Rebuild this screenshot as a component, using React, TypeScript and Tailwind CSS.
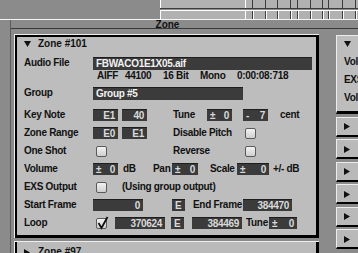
import React from 'react';

const keys = ['w-[85px]', 'w-[7px]', 'w-[13px]', 'w-[12px]', 'w-[13px]', 'w-[7px]', 'w-[13px]', 'w-[12px]', 'w-[6px]', 'w-[14px]', 'w-[13px]', 'w-[3px]'];

type FieldProps = { w: string; l?: string; r?: string; h?: string };

function Field({ w, l, r, h = 'h-[12px]' }: FieldProps) {
  return (
    <div className={`${w} ${h} shrink-0 bg-[#3b3b3b] border-t border-[#1e1e1e] text-[#dadada] flex items-center justify-between px-[3px] leading-none`}>
      <span>{l}</span>
      <span>{r}</span>
    </div>
  );
}

function Check({ on = false }: { on?: boolean }) {
  return (
    <div className="relative w-[11px] h-[11px] shrink-0 bg-gradient-to-b from-[#f2f2f2] to-[#cfcfcf] border border-[#5a5a5a] rounded-[2px]">
      {on && (
        <svg className="absolute -left-px -top-[3px]" width="13" height="14" viewBox="0 0 13 14">
          <path d="M2.5 7 L5.5 12 L11.5 1" fill="none" stroke="#111" strokeWidth="1.8" />
        </svg>
      )}
    </div>
  );
}

function DownTri() {
  return (
    <svg width="7" height="6" viewBox="0 0 7 6" className="shrink-0">
      <polygon points="0,0 7,0 3.5,6" fill="#111" />
    </svg>
  );
}

function RightTri() {
  return (
    <svg width="6" height="7" viewBox="0 0 6 7" className="shrink-0">
      <polygon points="0,0 6,3.5 0,7" fill="#111" />
    </svg>
  );
}

export default function App() {
  return (
    <div className="w-[358px] h-[253px] overflow-hidden bg-[#8b8b8b] font-['Liberation_Sans',Arial,sans-serif] font-bold text-[10px] tracking-[-0.3px] leading-[14px] text-[#111] flex flex-col">
      {/* key ruler */}
      <div className="h-[19px] flex shrink-0">
        <div className="w-[160px] shrink-0" />
        <div className="flex-1 flex flex-col">
          <div className="h-[9px] flex border-b border-[#3c3c3c]">
            {keys.map((w, i) => (
              <div key={i} className={`${w} shrink-0 h-full bg-[#b1b1b1] border-l ${i < 2 ? 'border-white' : 'border-[#3c3c3c]'}`} />
            ))}
          </div>
          <div className="h-px" />
          <div className="h-[9px] flex border-t border-white">
            {keys.map((w, i) => (
              <div key={i} className={`${w} shrink-0 h-full bg-[#b1b1b1] border-l ${i < 2 ? 'border-white' : 'border-[#3c3c3c] shadow-[inset_1px_0_0_#ffffff]'}`} />
            ))}
          </div>
        </div>
      </div>
      <div className="h-px bg-[#f4f4f4] shrink-0" />

      <div className="flex flex-1 min-h-0">
        <div className="w-[10px] shrink-0" />
        <div className="flex-1 flex flex-col border-l border-[#5c5c5c] min-w-0">
          <div className="h-[9px] border-b border-[#3a3a3a] flex shrink-0">
            <div className="w-[313px] text-center leading-[10px] tracking-normal">Zone</div>
          </div>

          <div className="flex flex-1 min-h-0">
            {/* zone column */}
            <div className="pl-[3px] pt-[5px] flex flex-col w-[308px] shrink-0">
              <div className="w-[305px] h-[204px] border-t border-l border-[#ededed] shrink-0">
                <div className="h-full border-t-2 border-l-2 border-r-[3px] border-b-[3px] border-black bg-[#bdbdbd] pl-[7px] flex flex-col">
                  <div className="h-[14px] flex items-center tracking-normal">
                    <DownTri />
                    <span className="ml-[7px]">Zone #101</span>
                  </div>

                  <div className="mt-[5px] h-[14px] flex items-center">
                    <div className="w-[69px] shrink-0">Audio File</div>
                    <div className="w-[219px] h-[13px] bg-[#3b3b3b] border-t border-[#1e1e1e] text-[#f2f2f2] px-[3px] flex items-center leading-none">FBWACO1E1X05.aif</div>
                  </div>
                  <div className="h-[11px] flex items-center whitespace-nowrap">
                    <div className="w-[73px] shrink-0" />
                    <span className="w-[28px] shrink-0">AIFF</span>
                    <span className="w-[38px] shrink-0">44100</span>
                    <span className="w-[37px] shrink-0">16 Bit</span>
                    <span className="w-[37px] shrink-0">Mono</span>
                    <span>0:00:08:718</span>
                  </div>

                  <div className="mt-[5px] h-[14px] flex items-center">
                    <div className="w-[69px] shrink-0">Group</div>
                    <div className="w-[150px] h-[13px] bg-[#3b3b3b] border-t border-[#1e1e1e] text-[#f2f2f2] px-[3px] flex items-center leading-none">Group #5</div>
                  </div>

                  <div className="mt-[8px] h-[14px] flex items-center whitespace-nowrap">
                    <div className="w-[69px] shrink-0">Key Note</div>
                    <Field w="w-[25px]" r="E1" />
                    <div className="w-[4px] shrink-0" />
                    <Field w="w-[25px]" r="40" />
                    <div className="ml-[26px] w-[34px] shrink-0">Tune</div>
                    <Field w="w-[25px]" l="±" r="0" />
                    <div className="w-[11px] shrink-0" />
                    <Field w="w-[25px]" l="-" r="7" />
                    <div className="ml-[12px]">cent</div>
                  </div>

                  <div className="mt-[4px] h-[14px] flex items-center whitespace-nowrap">
                    <div className="w-[69px] shrink-0">Zone Range</div>
                    <Field w="w-[25px]" r="E0" />
                    <div className="w-[4px] shrink-0" />
                    <Field w="w-[25px]" r="E1" />
                    <div className="ml-[26px] w-[72px] shrink-0">Disable Pitch</div>
                    <Check />
                  </div>

                  <div className="mt-[4px] h-[14px] flex items-center whitespace-nowrap">
                    <div className="w-[72px] shrink-0">One Shot</div>
                    <Check />
                    <div className="w-[66px] shrink-0" />
                    <div className="w-[72px] shrink-0">Reverse</div>
                    <Check />
                  </div>

                  <div className="mt-[4px] h-[14px] flex items-center whitespace-nowrap">
                    <div className="w-[69px] shrink-0">Volume</div>
                    <Field w="w-[25px]" l="±" r="0" />
                    <div className="ml-[5px] w-[30px] shrink-0">dB</div>
                    <div className="w-[19px] shrink-0">Pan</div>
                    <Field w="w-[26px]" l="±" r="0" />
                    <div className="ml-[12px] w-[27px] shrink-0">Scale</div>
                    <Field w="w-[32px]" l="±" r="0" />
                    <div className="ml-[4px]">+/- dB</div>
                  </div>

                  <div className="mt-[4px] h-[14px] flex items-center whitespace-nowrap">
                    <div className="w-[72px] shrink-0">EXS Output</div>
                    <Check />
                    <div className="ml-[15px]">(Using group output)</div>
                  </div>

                  <div className="mt-[4px] h-[14px] flex items-center whitespace-nowrap">
                    <div className="w-[69px] shrink-0">Start Frame</div>
                    <Field w="w-[50px]" r="0" />
                    <div className="w-[29px] shrink-0" />
                    <Field w="w-[13px]" l="E" />
                    <div className="ml-[8px] w-[50px] shrink-0">End Frame</div>
                    <Field w="w-[49px]" r="384470" />
                  </div>

                  <div className="mt-[4px] h-[14px] flex items-center whitespace-nowrap">
                    <div className="w-[72px] shrink-0">Loop</div>
                    <Check on />
                    <div className="w-[8px] shrink-0" />
                    <Field w="w-[50px]" r="370624" />
                    <div className="w-[6px] shrink-0" />
                    <Field w="w-[13px]" l="E" />
                    <div className="w-[8px] shrink-0" />
                    <Field w="w-[50px]" r="384469" />
                    <div className="ml-[4px] w-[23px] shrink-0">Tune</div>
                    <Field w="w-[28px]" l="±" r="0" />
                  </div>
                </div>
              </div>

              <div className="mt-[3px] w-[305px] flex-1 border-t border-l border-[#ededed]">
                <div className="h-full border-l-2 border-r-[3px] border-black bg-[#bababa] pl-[7px] pt-[5px]">
                  <div className="h-[10px] flex items-center leading-[10px] tracking-normal">
                    <RightTri />
                    <span className="ml-[8px]">Zone #97</span>
                  </div>
                </div>
              </div>
            </div>

            {/* next column, clipped */}
            <div className="ml-[17px] pt-[6px] flex-1 min-w-0 overflow-hidden flex flex-col gap-[2.5px]">
              <div className="h-[79px] shrink-0 border-t border-l border-[#ededed] border-b-[3px] border-b-black bg-[#bdbdbd] pl-[7px] whitespace-nowrap">
                <div className="mt-[5px]">
                  <DownTri />
                </div>
                <div className="mt-[6px] leading-[18px]">Vol</div>
                <div className="leading-[18px]">EXS</div>
                <div className="leading-[18px]">Vol</div>
              </div>
              {[0, 1, 2, 3, 4, 5].map((i) => (
                <div key={i} className="h-[20px] shrink-0 border-t border-l border-[#ededed] border-b-2 border-b-black bg-[#b9b9b9] pl-[7px] pt-px flex items-center">
                  <RightTri />
                </div>
              ))}
            </div>
          </div>
        </div>
      </div>
    </div>
  );
}
